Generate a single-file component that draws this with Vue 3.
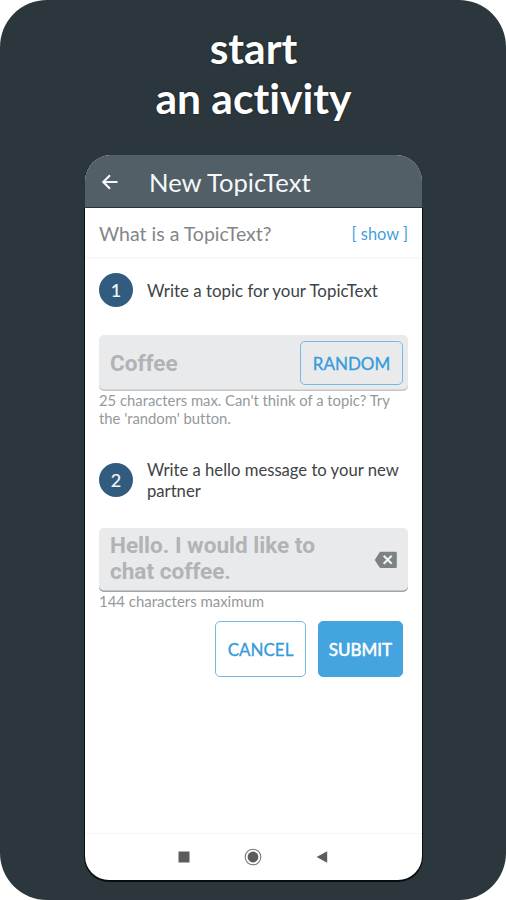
<script setup>
const steps = [
  { number: 1, label: 'Write a topic for your TopicText' },
  { number: 2, label: 'Write a hello message to your new partner' },
]
</script>

<template>
  <main class="poster">
    <h1 class="headline">
      <span class="start">start</span>
      <span class="activity">an activity</span>
    </h1>
    <section class="phone">
      <header class="bar">
        <svg class="back" width="16" height="16" viewBox="0 0 16 16" fill="none" stroke="currentColor" stroke-width="2.1">
          <path d="M15.5 8H1.5M8 1.3 1.3 8 8 14.7" />
        </svg>
        <h2 class="title">New TopicText</h2>
      </header>
      <div class="about">
        <span class="question">What is a TopicText?</span>
        <a class="show">[ show ]</a>
      </div>
      <div class="form">
        <div class="step first">
          <span class="badge">{{ steps[0].number }}</span>
          <span class="label one">{{ steps[0].label }}</span>
        </div>
        <div class="field topic">
          <span class="value">Coffee</span>
          <button class="btn random"><span>RANDOM</span></button>
        </div>
        <p class="hint">25 characters max. Can't think of a topic? Try<br />the 'random' button.</p>
        <div class="step second">
          <span class="badge">{{ steps[1].number }}</span>
          <span class="label two">{{ steps[1].label }}</span>
        </div>
        <div class="field message">
          <span class="value">Hello. I would like to<br />chat coffee.</span>
          <svg class="clear" width="24" height="18" viewBox="0 0 24 18">
            <path d="M7 .7h14.5a1.3 1.3 0 0 1 1.3 1.3v13.7a1.3 1.3 0 0 1-1.3 1.3H7a2 2 0 0 1-1.7-1L.7 9l4.6-7.3A2 2 0 0 1 7 .7Z" fill="#7b8385" />
            <path d="m9.7 4.8 8 8m0-8-8 8" stroke="#f3f4f5" stroke-width="2" fill="none" />
          </svg>
        </div>
        <p class="hint max">144 characters maximum</p>
        <div class="actions">
          <button class="btn cancel"><span>CANCEL</span></button>
          <button class="btn submit"><span>SUBMIT</span></button>
        </div>
      </div>
      <nav class="nav">
        <svg width="12" height="12" viewBox="0 0 12 12"><path d="M.5.5h11v11H.5Z" fill="#5c5c5c" /></svg>
        <svg width="18" height="18" viewBox="0 0 18 18">
          <circle cx="9" cy="9" r="7.8" fill="none" stroke="#777" stroke-width="1.1" />
          <circle cx="9" cy="9" r="5.4" fill="#5c5c5c" />
        </svg>
        <svg width="12" height="12" viewBox="0 0 12 12"><path d="M11.2.3v11.4L.6 6Z" fill="#5c5c5c" /></svg>
      </nav>
    </section>
  </main>
</template>

<style>
body {
  background: #fff;
}
</style>

<style scoped>
.poster {
  box-sizing: border-box;
  width: 506px;
  height: 900px;
  display: flex;
  flex-direction: column;
  align-items: center;
  padding-top: 23px;
  border-radius: 47px;
  background: #2c373d;
  font-family: Lato, sans-serif;
  font-variant-ligatures: none;
}
.headline {
  display: flex;
  flex-direction: column;
  align-items: center;
  margin: 0;
  height: 132px;
  padding-left: 1px;
  font-size: 42.5px;
  line-height: 50px;
  font-weight: 700;
  color: #fff;
  text-shadow: 0 0 2px #10181c;
}
.phone {
  box-sizing: border-box;
  display: flex;
  flex-direction: column;
  width: 337px;
  height: 725px;
  margin-left: 1px;
  border-radius: 26px 26px 24px 24px;
  background: #fff;
  box-shadow: 0 1px 0 1px #080d0f;
  clip-path: polygon(0 0, 100% 0, 100% 53px, 339px 53px, 339px 728px, -2px 728px, -2px 53px, 0 53px);
  overflow: hidden;
}
.bar {
  box-sizing: border-box;
  display: flex;
  align-items: center;
  gap: 31px;
  height: 53px;
  padding: 1px 0 0 17px;
  border-bottom: 1px solid #27343b;
  background: #535f67;
  color: #f4f8fa;
}
.title {
  margin: 0;
  font-size: 25.6px;
  line-height: 34px;
  font-weight: 400;
}
.about {
  box-sizing: border-box;
  display: flex;
  align-items: center;
  justify-content: space-between;
  height: 51px;
  padding: 1px 14px 0;
  border-bottom: 2px solid #f8f8f8;
}
.question {
  font-size: 19.5px;
  color: #82868a;
}
.show {
  font-size: 16.4px;
  color: #459fdb;
}
.form {
  display: flex;
  flex-direction: column;
  padding: 13px 14px 0;
}
.step {
  display: flex;
  align-items: center;
  gap: 14px;
  height: 36px;
}
.badge {
  display: flex;
  align-items: center;
  justify-content: center;
  flex: none;
  width: 34px;
  height: 34px;
  border-radius: 50%;
  background: #315b7f;
  color: #f4f7f9;
  font-size: 18px;
  -webkit-text-stroke: 0.2px currentColor;
}
.label {
  font-size: 16.9px;
  line-height: 21px;
  color: #404346;
}
.two {
  padding-top: 2px;
  font-size: 16.65px;
}
.field {
  box-sizing: border-box;
  display: flex;
  align-items: center;
  justify-content: space-between;
  width: 309px;
  border-radius: 5px;
  background: #e9eaec;
  box-shadow: inset 0 -1.5px 0 #c3c6c8;
}
.value {
  font-family: Roboto, sans-serif;
  font-size: 22.55px;
  line-height: 26.5px;
  font-weight: 700;
  color: #b0b4b6;
}
.topic {
  height: 56px;
  margin-top: 27px;
  padding: 0 5px 0 11px;
}
.topic .value {
  padding-top: 2px;
}
.hint {
  margin: 0;
  font-size: 14.8px;
  line-height: 18px;
  color: #94999c;
  white-space: nowrap;
}
.max {
  font-size: 14.95px;
}
.second {
  margin-top: 32px;
  height: 42px;
}
.message {
  height: 64px;
  margin-top: 27px;
  padding: 0 10px 2px 11px;
  box-shadow: inset 0 -1.5px 0 #9ca5a9;
}
.clear {
  margin-top: 2px;
}
.btn {
  box-sizing: border-box;
  display: flex;
  align-items: center;
  justify-content: center;
  padding: 0;
  border: 1px solid #76b9e2;
  border-radius: 5px;
  background: transparent;
  color: #369bda;
  font-family: Lato, sans-serif;
  font-size: 17px;
  font-weight: 400;
  -webkit-text-stroke: 0.3px currentColor;
}
.random {
  width: 103px;
  height: 44px;
}
.actions {
  display: flex;
  justify-content: flex-end;
  gap: 12px;
  margin-top: 11px;
  padding-right: 5px;
}
.cancel {
  width: 91px;
  height: 56px;
}
.submit {
  width: 85px;
  height: 56px;
  border-color: #43a4e0;
  background: #43a4e0;
  color: #fff;
  -webkit-text-stroke-width: 0.55px;
}
.nav {
  box-sizing: border-box;
  display: flex;
  justify-content: center;
  align-items: center;
  gap: 54px;
  height: 47px;
  margin-top: auto;
  padding: 0 2px 0 0;
  border-top: 1px solid #f6f6f6;
}
</style>
